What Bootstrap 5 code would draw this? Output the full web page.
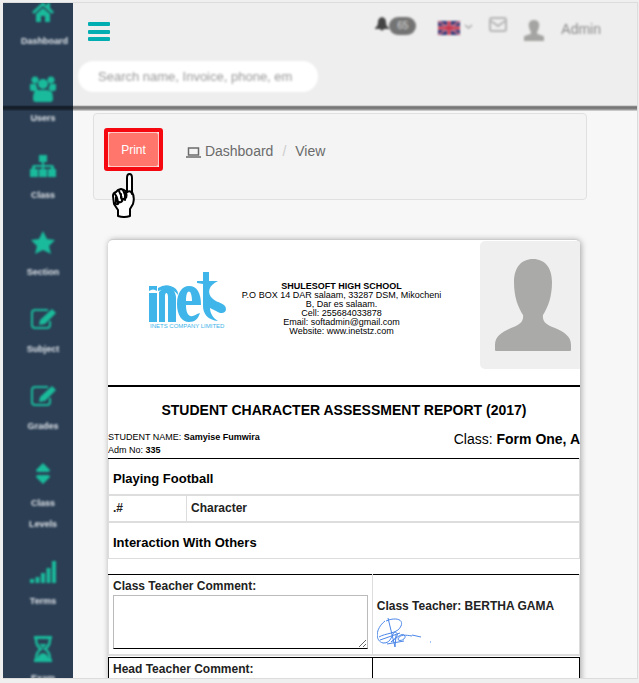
<!DOCTYPE html>
<html lang="en">
<head>
<meta charset="utf-8">
<meta name="viewport" content="width=device-width, initial-scale=1">
<title>Student Character Assessment Report</title>
<link href="https://cdn.jsdelivr.net/npm/bootstrap@5.3.0/dist/css/bootstrap.min.css" rel="stylesheet">
<style>
body{font-family:"Liberation Sans",Arial,sans-serif;font-size:12px;background:#efefef;color:#000;line-height:1.2}
.shell{height:100vh;padding:2px 1px 4px 3px}
.app-frame{background:#f7f7f7;border-top:1px solid #dcdcdc;border-right:1px solid #dcdcdc;border-bottom:1px solid #dcdcdc}
.topline{top:102px;left:0;right:0;height:6px;background:linear-gradient(rgba(0,0,0,0),rgba(0,0,0,.54) 30%,rgba(0,0,0,.48) 65%,rgba(0,0,0,.1))}
.side{width:70px;background:#2b3e54}
.side ul{margin-top:-15px;filter:blur(1px)}
.side a{display:block;padding:11px 8px 13px 18px;color:#dfe3e8;font-size:9px;font-weight:bold;line-height:21px;text-align:center;white-space:nowrap}
.side a svg{display:block;width:26px;height:26px;margin:0 auto 6px;fill:#1abb9c;color:#1abb9c}
.topbar{height:102px;background:#eee}
.burger{width:22px;height:19px;margin:19px 0 0 15px}
.burger span{height:4px;border-radius:1px;background:#00adb0}
.finder{width:240px;height:31px;margin:17px 0 0 5px;border-radius:16px;font-size:13px;padding:0 10px 0 20px;filter:blur(1px)}
.finder::placeholder{color:#999;opacity:1}
.tools{filter:blur(1px);color:#8a8a8a;font-size:14px;padding:14px 36px 0 0}
.tools svg,.tools span{flex-shrink:0}
.count{background:#747474;color:#ddd;font-size:10px;line-height:18px;width:27px;border-radius:9px;text-align:center}
.work{padding:8px 50px 0 20px}
.crumbs{height:87px;background:#f4f4f4;border:1px solid #e0e0e0;border-radius:4px;padding:14px 10px}
.hot{border:4px solid #f50810;border-radius:3px;width:59px;height:43px}
.btn-print{background:#ff766c;border:1px solid #ffc9c5;color:#fff;font-size:12px;border-radius:3px;padding:0}
.btn-print:hover{background:#f2655b;color:#fff}
.hand{left:17px;top:59px}
.trail{margin:13px 0 0 23px}
.breadcrumb{font-size:14px;line-height:20px;--bs-breadcrumb-item-padding-x:9px;--bs-breadcrumb-divider-color:#ccc}
.breadcrumb a,.breadcrumb-item.active{color:#6b6b6b}
.report{margin:39px 7px 0 15px;border-top:1px solid #ccc;border-radius:5px 5px 0 0;box-shadow:1px 1px 6px rgba(0,0,0,.35);min-height:460px}
.masthead{height:147px;border-bottom:2px solid #000;padding-top:1px}
.logo{margin:31px 0 0 40px}
.school{font-size:9px;line-height:9px;padding:41px 24px 0 0}
.photo{width:100px;height:128px;background:#efefef;border-radius:5px 0 0 5px}
.rtitle{font-size:14px;line-height:18px;padding:14px 0 12px;margin:0}
.pupil{font-size:9px;line-height:13px;height:27px}
.klass{font-size:14px;line-height:16px}
.grid-t{width:100%;border-collapse:collapse;table-layout:fixed}
.grid-t th,.grid-t td{padding:0 4px;border:1px solid #ddd}
.marks .num{width:78px}
.marks tr:first-child th{border-top:1px solid #000;height:36px;padding-top:5px}
.marks .thick td{border-top:2px solid #ddd;border-bottom:2px solid #ddd;height:27px;font-weight:bold;color:#222}
.marks tr:last-child th{height:37px;padding-top:5px}
.marks th{font-size:13px;font-weight:bold}
.notes{margin-top:15px}
.notes td{font-weight:bold;color:#222}
.notes tr:first-child td{border-top:1px solid #000;border-bottom:2px solid #ddd;height:80px}
.notes tr:first-child td:last-child{vertical-align:bottom;padding-bottom:4px}
.notes td:first-child,.heads td:first-child{width:56%}
.notes textarea{display:block;width:100%;height:54px;border:1px solid #bbb;border-bottom-color:#000;margin-top:2px;border-radius:0}
.heads{margin-top:1px}
.heads td{border:1px solid #000;height:45px;vertical-align:top;padding-top:4px;font-weight:bold;color:#222}
.sign{margin-top:2px}
</style>
</head>
<body>
<div class="shell">
<div class="app-frame d-flex h-100 position-relative overflow-hidden">
  <nav class="side flex-shrink-0" aria-label="Main">
    <ul class="list-unstyled mb-0">
      <li><a class="text-decoration-none" href="#"><svg viewBox="0 0 26 26"><path d="M13 3 2 13l2 2 9-8 9 8 2-2-4-4V4h-3v3z"/><path d="M13 9l-7 6v8h5v-6h4v6h5v-8z"/></svg>Dashboard</a></li>
      <li><a class="text-decoration-none" href="#"><svg viewBox="0 0 26 26"><circle cx="5" cy="4" r="3.5"/><circle cx="21" cy="4" r="3.5"/><circle cx="13" cy="8" r="5"/><path d="M0 8h6l2 7H2q-2 0-2-2zM26 8h-6l-2 7h6q2 0 2-2zM6 14h14q3 2 3 9 0 3-3 3H6q-3 0-3-3 0-7 3-9z"/></svg>Users</a></li>
      <li><a class="text-decoration-none" href="#"><svg viewBox="0 0 26 26"><path d="M9 2h8v7h-3v3h8q2 0 2 2v2h2v8h-8v-8h3v-2h-7v2h3v8H9v-8h3v-2H5v2h3v8H0v-8h2v-2q0-2 2-2h8V9H9z"/></svg>Class</a></li>
      <li><a class="text-decoration-none" href="#"><svg viewBox="0 0 26 26"><path d="M13 1l4 8 8 1-6 6 2 8-8-4-8 4 2-8-6-6 8-1z"/></svg>Section</a></li>
      <li><a class="text-decoration-none" href="#"><svg viewBox="0 0 26 26"><path d="M18 3H5Q2 3 2 6v12q0 3 3 3h12q3 0 3-3v-4" fill="none" stroke="currentColor" stroke-width="2"/><path d="M22 2l4 4-11 11-6 1 1-5z"/></svg>Subject</a></li>
      <li><a class="text-decoration-none" href="#"><svg viewBox="0 0 26 26"><path d="M18 3H5Q2 3 2 6v12q0 3 3 3h12q3 0 3-3v-4" fill="none" stroke="currentColor" stroke-width="2"/><path d="M22 2l4 4-11 11-6 1 1-5z"/></svg>Grades</a></li>
      <li><a class="text-decoration-none" href="#"><svg viewBox="0 0 26 26"><path d="M13 2l7 7q0 2-2 2H8q-2 0-2-2zM13 23l7-7q0-2-2-2H8q-2 0-2 2z"/></svg>Class<br>Levels</a></li>
      <li><a class="text-decoration-none" href="#"><svg viewBox="0 0 26 26"><path d="M0 20h4v4H0zM5.500 18h4v6h-4zM11 14h4v10h-4zM16.500 9h4v15h-4zM22 2h4v22h-4z"/></svg>Terms</a></li>
      <li><a class="text-decoration-none" href="#"><svg viewBox="0 0 26 26"><path d="M4 0h18v3H4zM4 23h18v3H4z"/><path d="M6 3q0 7 5 10-5 3-5 11h14q0-8-5-11 5-3 5-10" fill="none" stroke="currentColor" stroke-width="2.500"/><path d="M9 8h8l-4 4zM7 24q1-6 6-7 5 1 6 7z"/></svg>Exam</a></li>
    </ul>
  </nav>
  <div class="flex-grow-1 overflow-hidden">
    <header class="topbar">
      <div class="d-flex justify-content-between align-items-start">
        <button class="burger border-0 bg-transparent p-0 d-flex flex-column justify-content-between" type="button" aria-label="Toggle menu"><span class="w-100"></span><span class="w-100"></span><span class="w-100"></span></button>
        <div class="tools d-flex align-items-start">
          <svg width="14" height="14" viewBox="0 0 14 14" fill="#444" role="img" aria-label="Alerts"><path d="M7 0q4 1 4 5 0 4 3 6v1H0v-1q3-2 3-6 0-4 4-5zM5 12h4q-2 3-4 0z"/></svg>
          <span class="count">65</span>
          <svg class="ms-3 mt-1" width="28" height="14" viewBox="-6 0 28 14" role="img" aria-label="English"><path fill="#2b3474" d="M0 0h22v14H0z"/><path d="M0 0l22 14M22 0L0 14" stroke="#b9a3c0" stroke-width="2"/><path d="M11 0v14M0 7h22" stroke="#e0a4b0" stroke-width="4"/><path d="M11 0v14M0 7h22" stroke="#c5354c" stroke-width="2.500"/><path d="M0 0l22 14M22 0L0 14" stroke="#c5354c"/></svg>
          <svg class="ms-1 mt-1" width="9" height="14" viewBox="0 0 9 14" fill="none" stroke="#aaa" stroke-width="1.500" aria-hidden="true"><path d="M1 4l3.500 3L8 4"/></svg>
          <svg class="ms-3" width="18" height="16" viewBox="0 0 18 16" fill="none" stroke="#b5b5b5" stroke-width="2" role="img" aria-label="Messages"><rect x="1" y="1" width="16" height="13" rx="2"/><path d="M2 4l7 5 7-5"/></svg>
          <svg class="ms-3" width="22" height="27" viewBox="0 0 22 27" fill="#a4a4a2" role="img" aria-label="Profile"><path d="M11 3c4 0 6 3 5 7-.5 3-2 4-2 6 0 2 7 2 7 4v4H1v-4c0-2 7-2 7-4 0-2-1.500-3-2-6-1-4 1-7 5-7z"/></svg>
          <span class="ms-3 mt-1">Admin</span>
        </div>
      </div>
      <input class="finder border-0 bg-white d-block" type="search" aria-label="Search" placeholder="Search name, Invoice, phone, em">
    </header>
    <main class="work">
      <div class="crumbs d-flex align-items-start position-relative">
        <div class="hot d-flex"><button class="btn btn-print flex-grow-1" type="button">Print</button></div>
        <svg class="hand position-absolute" width="27" height="45" viewBox="0 0 27 45" fill="#fff" stroke="#000" stroke-width="2" stroke-linejoin="round" stroke-linecap="round" aria-hidden="true"><path d="M16 19V5q0-4 2.500-4T21 5v14q3 5 1 12l-3 5v7q-6 2-12 0v-6l-4-6-1-8q0-3 3-4l2-2 3-1 3 1z"/><path d="M4 21q3 4 3 10M8 18q3 5 3 10M12 17q3 5 2 10M3 30q4 3 5-1 3 1 4-3 5 0 3-7M16 19q4-2 5 2M5 24v5M10 21v4" fill="none"/></svg>
        <nav class="trail" aria-label="Breadcrumb">
          <ol class="breadcrumb mb-0">
            <li class="breadcrumb-item"><a class="text-decoration-none" href="#"><svg width="15" height="11" viewBox="0 0 15 11" fill="none" stroke="currentColor" aria-hidden="true"><path d="M2.500 1h10v7h-10zM0 10h15" stroke-width="1.500"/></svg> Dashboard</a></li>
            <li class="breadcrumb-item active" aria-current="page">View</li>
          </ol>
        </nav>
      </div>
      <article class="report bg-white overflow-hidden">
        <div class="masthead d-flex">
          <svg class="logo flex-shrink-0" width="79" height="58" viewBox="0 0 79 58" fill="#3fb5ea" role="img" aria-label="inets company limited"><path d="M1 21h8v29H1zM1 14h8v5q-4-3-8 0z"/><path d="M11 20c6-6 16-6 17 5v25h-8V25c0-5-3-5-3-1v26h-6z"/><path d="M10 16q9-6 18 1 2 2 2 6-6-9-20-4z"/><path fill-rule="evenodd" d="M41 14c8 0 12 7 12 19H38c0 10 4 14 11 9l3-1c-2 6-5 9-11 9-7 0-12-7-12-18s5-18 12-18zm-3 15h6c0-12-6-13-6 0z"/><path d="M55 0h6v9h9c-9 4-12 12-5 18 4 4 13 4 13 10 0 5-6 5-10 2l-6-3c0 5 3 10 8 13-10-1-15-7-15-15V12l-6-1v-2h6z"/><text x="2" y="56" font-size="6" font-family="Liberation Sans">INETS COMPANY LIMITED</text></svg>
          <div class="school flex-grow-1 text-center"><strong>SHULESOFT HIGH SCHOOL</strong><br>P.O BOX 14 DAR salaam, 33287 DSM, Mikocheni<br>B, Dar es salaam.<br>Cell: 255684033878<br>Email: softadmin@gmail.com<br>Website: www.inetstz.com</div>
          <svg class="photo flex-shrink-0" viewBox="0 0 100 128" fill="#aaaaa8" role="img" aria-label="Student photo"><path d="M53 18c12 0 19 9 19 23 0 15-4 25-9 33-1 7 4 10 12 13 9 4 16 8 16 17v5q0 1-1 1H16q-1 0-1-1v-5c0-9 7-13 16-17 8-3 13-6 12-13-5-8-9-18-9-33 0-14 7-23 19-23z"/></svg>
        </div>
        <h1 class="rtitle fw-bold text-center">STUDENT CHARACTER ASSESSMENT REPORT (2017)</h1>
        <div class="pupil d-flex justify-content-between">
          <div>STUDENT NAME: <strong>Samyise Fumwira</strong><br>Adm No: <strong>335</strong></div>
          <div class="klass">Class: <strong>Form One, A</strong></div>
        </div>
        <table class="grid-t marks">
          <colgroup><col class="num"><col></colgroup>
          <tr><th colspan="2">Playing Football</th></tr>
          <tr class="thick"><td>.#</td><td>Character</td></tr>
          <tr><th colspan="2">Interaction With Others</th></tr>
        </table>
        <table class="grid-t notes">
          <tr><td><label for="ctc">Class Teacher Comment:</label><textarea id="ctc"></textarea></td>
          <td>Class Teacher: BERTHA GAMA<svg class="sign d-block" width="56" height="34" viewBox="0 0 56 34" fill="none" stroke="#4a86e8" role="img" aria-label="Signature"><path d="M11 2l7 29M9 5C18 1 27 3 24 10 21 18 8 17 2 21M8 5C-2 13-2 25 6 27 15 28 15 16 18 16c6 2-1 8-4 10 10-8 12-9 14-6 1 4-7 6-7 3 2-5 8-4 14-3M3 24l20-7M10 28l17-3M35 19l9 2M18 31l1-12M53 26h1"/></svg></td></tr>
        </table>
        <table class="grid-t heads"><tr><td>Head Teacher Comment:</td><td></td></tr></table>
      </article>
    </main>
  </div>
  <div class="topline position-absolute"></div>
</div>
</div>
<script src="https://cdn.jsdelivr.net/npm/bootstrap@5.3.0/dist/js/bootstrap.bundle.min.js"></script>
</body>
</html>
